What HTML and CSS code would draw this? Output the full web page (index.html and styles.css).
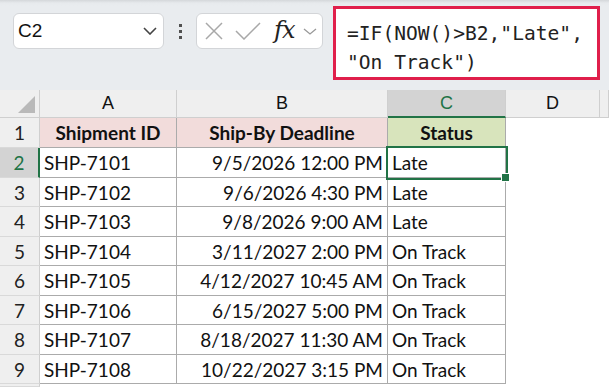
FILE: index.html
```html
<!DOCTYPE html>
<html lang="en">
<head>
    <meta charset="UTF-8">
    <meta name="viewport" content="width=device-width, initial-scale=1.0">
    <title>Shipment Status</title>
    <link rel="stylesheet" href="styles.css">
</head>
<body>
    <div class="toolbar">
        <div class="name-box">
            <span>C2</span>
            <svg class="chevron" width="14" height="8" viewBox="0 0 14 8"><polyline points="1,1 7,7 13,1" fill="none" stroke="#444" stroke-width="1.6"/></svg>
        </div>
        <div class="grip"><i></i><i></i><i></i></div>
        <div class="fx-box">
            <svg width="18" height="18" viewBox="0 0 18 18"><path d="M1 1 L17 17 M17 1 L1 17" stroke="#a8a8a8" stroke-width="1.5"/></svg>
            <svg width="26" height="18" viewBox="0 0 26 18"><polyline points="1,9 9,17 25,1" fill="none" stroke="#a8a8a8" stroke-width="1.5"/></svg>
            <span class="fx">fx</span>
            <svg width="14" height="7" viewBox="0 0 14 7"><polyline points="1,1 7,6 13,1" fill="none" stroke="#999" stroke-width="1.3"/></svg>
        </div>
        <div class="formula">=IF(NOW()&gt;B2,"Late",<br>"On Track")</div>
    </div>

    <div class="sheet">
        <div class="corner"></div>
        <div class="col-head">A</div>
        <div class="col-head">B</div>
        <div class="col-head active">C</div>
        <div class="col-head">D</div>
        <div class="col-head"></div>

        <div class="row-head">1</div>
        <div class="cell title red">Shipment ID</div>
        <div class="cell title red">Ship-By Deadline</div>
        <div class="cell title green">Status</div>
        <div class="blank"></div><div class="blank"></div>

        <div class="row-head active">2</div>
        <div class="cell">SHP-7101</div>
        <div class="cell num">9/5/2026 12:00 PM</div>
        <div class="cell selected">Late</div>
        <div class="blank"></div><div class="blank"></div>

        <div class="row-head">3</div>
        <div class="cell">SHP-7102</div>
        <div class="cell num">9/6/2026 4:30 PM</div>
        <div class="cell">Late</div>
        <div class="blank"></div><div class="blank"></div>

        <div class="row-head">4</div>
        <div class="cell">SHP-7103</div>
        <div class="cell num">9/8/2026 9:00 AM</div>
        <div class="cell">Late</div>
        <div class="blank"></div><div class="blank"></div>

        <div class="row-head">5</div>
        <div class="cell">SHP-7104</div>
        <div class="cell num">3/11/2027 2:00 PM</div>
        <div class="cell">On Track</div>
        <div class="blank"></div><div class="blank"></div>

        <div class="row-head">6</div>
        <div class="cell">SHP-7105</div>
        <div class="cell num">4/12/2027 10:45 AM</div>
        <div class="cell">On Track</div>
        <div class="blank"></div><div class="blank"></div>

        <div class="row-head">7</div>
        <div class="cell">SHP-7106</div>
        <div class="cell num">6/15/2027 5:00 PM</div>
        <div class="cell">On Track</div>
        <div class="blank"></div><div class="blank"></div>

        <div class="row-head">8</div>
        <div class="cell">SHP-7107</div>
        <div class="cell num">8/18/2027 11:30 AM</div>
        <div class="cell">On Track</div>
        <div class="blank"></div><div class="blank"></div>

        <div class="row-head">9</div>
        <div class="cell">SHP-7108</div>
        <div class="cell num">10/22/2027 3:15 PM</div>
        <div class="cell">On Track</div>
        <div class="blank"></div><div class="blank"></div>

        <div class="row-head"></div>
        <div class="blank"></div><div class="blank"></div><div class="blank"></div><div class="blank"></div><div class="blank"></div>
    </div>
</body>
</html>
```

FILE: styles.css
```css
/* Excel-like formula bar and worksheet */
body {
    margin: 0;
    width: 609px;
    height: 387px;
    overflow: hidden;
    background-color: #ffffff;
    font-family: "Liberation Sans", Arial, sans-serif;
}

.toolbar {
    height: 90px;
    box-sizing: border-box;
    display: flex;
    align-items: flex-start;
    padding: 13px 0 0 13px;
    background: linear-gradient(#d4d7da 0, #e7eaed 3px, #e9ecef 6px);
}

.name-box {
    width: 151px;
    height: 36px;
    box-sizing: border-box;
    display: flex;
    align-items: center;
    justify-content: space-between;
    padding: 0 6px 0 4px;
    background-color: white;
    border: 1px solid #d3d5d8;
    border-radius: 6px;
    font-size: 19px;
    color: #111;
}

.grip {
    display: flex;
    flex-direction: column;
    gap: 3px;
    margin: 11px 14px 0 15px;
}

.grip i {
    display: block;
    width: 3px;
    height: 3px;
    background-color: #505050;
}

.fx-box {
    width: 127px;
    height: 36px;
    box-sizing: border-box;
    display: flex;
    align-items: center;
    padding: 0 0 0 8px;
    gap: 13px;
    background-color: white;
    border: 1px solid #d3d5d8;
    border-radius: 6px;
}

.fx-box svg:nth-child(2) {
    margin-left: -1px;
}

.fx {
    font-family: "DejaVu Serif", "Liberation Serif", serif;
    font-style: italic;
    font-size: 24px;
    letter-spacing: -1px;
    color: #222;
    margin: 0 -4px 3px 0;
}

.formula {
    width: 267px;
    height: 74px;
    box-sizing: border-box;
    margin: -7px 0 0 10px;
    padding: 10px 0 0 11px;
    background-color: white;
    border: 3px solid #e01f4b;
    font-family: "DejaVu Sans Mono", monospace;
    font-size: 19.6px;
    line-height: 29px;
    color: #222;
    white-space: nowrap;
}

.sheet {
    display: grid;
    grid-template-columns: 40px 137px 211px 118px 94px 1fr;
    grid-template-rows: 28px 30px 30px 29px 30px 29px 30px 29px 30px 29px 1fr;
    height: 297px;
    font-family: Lato, "Liberation Sans", sans-serif;
    font-size: 19px;
    color: #111;
}

.sheet > div {
    box-sizing: border-box;
    display: flex;
    align-items: center;
    white-space: nowrap;
}

.corner {
    background-color: #efefef;
    border-right: 1px solid #cfcfcf;
    border-bottom: 1px solid #cfcfcf;
    position: relative;
}

.corner::after {
    content: "";
    position: absolute;
    right: 4px;
    bottom: 4px;
    border-style: solid;
    border-width: 0 0 17px 17px;
    border-color: transparent transparent #b9b9b9 transparent;
}

.col-head {
    justify-content: center;
    background-color: #efefef;
    border-right: 1px solid #cfcfcf;
    border-bottom: 1px solid #cfcfcf;
    font-family: "Liberation Sans", Arial, sans-serif;
    font-size: 18px;
    color: #111;
}

.col-head.active {
    background-color: #d3d3d3;
    border-bottom: 2px solid #217346;
    color: #217346;
}

.row-head {
    justify-content: center;
    background-color: #efefef;
    border-right: 1px solid #cfcfcf;
    border-bottom: 1px solid #d9d9d9;
    color: #222;
}

.row-head.active {
    background-color: #d3d3d3;
    border-right: 2px solid #217346;
    color: #217346;
}

.cell {
    padding: 0 4px;
    border-right: 1px solid #ababab;
    border-bottom: 1px solid #ababab;
}

.cell.num {
    justify-content: flex-end;
}

.cell.title {
    justify-content: center;
    font-weight: bold;
}

.cell.red {
    background-color: #f2dcdb;
}

.cell.green {
    background-color: #d8e4bc;
}

.cell.selected {
    position: relative;
    z-index: 1;
    outline: 2px solid #217346;
    outline-offset: 0;
}

.cell.selected::after {
    content: "";
    position: absolute;
    right: -5px;
    bottom: -5px;
    width: 7px;
    height: 7px;
    background-color: #217346;
    border: 1px solid white;
}

.blank {
    background-color: white;
}
```
